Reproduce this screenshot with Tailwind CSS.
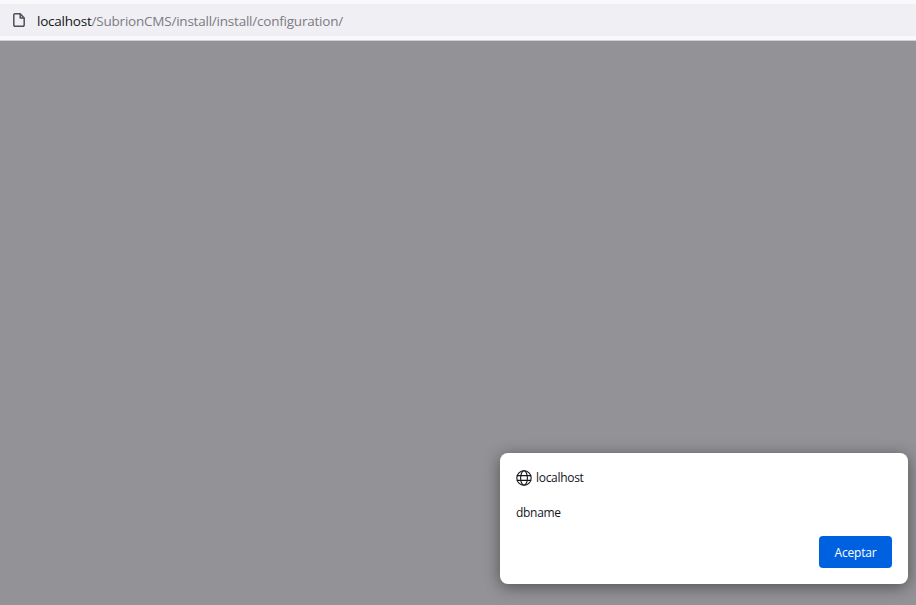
<!DOCTYPE html>
<html lang="en">
<head>
    <meta charset="UTF-8">
    <title>localhost</title>
    <script src="https://cdn.jsdelivr.net/npm/@tailwindcss/browser@4"></script>
</head>
<body class="h-[605px] w-[916px] overflow-hidden font-['Open_Sans',sans-serif]">
    <div class="flex h-full flex-col">
        <!-- Address bar -->
        <header class="h-[41px] border-b border-[#cfcfd8] bg-[#f9f9fb] pt-[4px]">
            <div class="flex h-[32px] items-center bg-[#f0f0f4] pl-[13px]">
                <svg class="h-[14px] w-[12px]" viewBox="0 0 12 14" fill="none" stroke="#4f4f59" stroke-width="1.5" stroke-linejoin="round">
                    <path d="M2 .8h5.2l4 4.2v7a1.2 1.2 0 0 1-1.2 1.2H2A1.2 1.2 0 0 1 .8 12V2A1.2 1.2 0 0 1 2 .8z"/>
                    <path d="M7.2 1v4h4"/>
                </svg>
                <p class="mt-[2px] ml-[12px] text-[13.5px] tracking-[-0.22px] text-[#7c7a84]"><span class="text-[#15141a]">localhost</span>/SubrionCMS/install/install/configuration/</p>
            </div>
        </header>

        <!-- Dimmed page with alert -->
        <main class="flex flex-1 items-end justify-end bg-[#939296] pr-[8px] pb-[21px]">
            <div class="flex h-[131px] w-[408px] flex-col rounded-lg bg-white px-[16px] pt-[16px] shadow-[0_3px_16px_rgba(0,0,0,0.45)]">
                <div class="flex items-center gap-[4px]">
                    <svg class="h-[16px] w-[16px]" viewBox="0 0 16 16" fill="none" stroke="#15141a" stroke-width="1.1">
                        <circle cx="8" cy="8" r="7.2"/>
                        <ellipse cx="8" cy="8" rx="3.4" ry="7.2"/>
                        <path d="M.8 5.6h14.4M.8 10.4h14.4"/>
                    </svg>
                    <span class="text-[12px] tracking-[-0.3px] text-[#15141a]">localhost</span>
                </div>
                <p class="mt-[17px] text-[12px] tracking-[-0.3px] text-[#15141a]">dbname</p>
                <div class="mt-[14px] flex justify-end">
                    <button class="h-[32px] w-[73px] rounded-[4px] bg-[#0061e0] pt-[1px] text-[12px] tracking-[-0.2px] text-white">Aceptar</button>
                </div>
            </div>
        </main>
    </div>
</body>
</html>
